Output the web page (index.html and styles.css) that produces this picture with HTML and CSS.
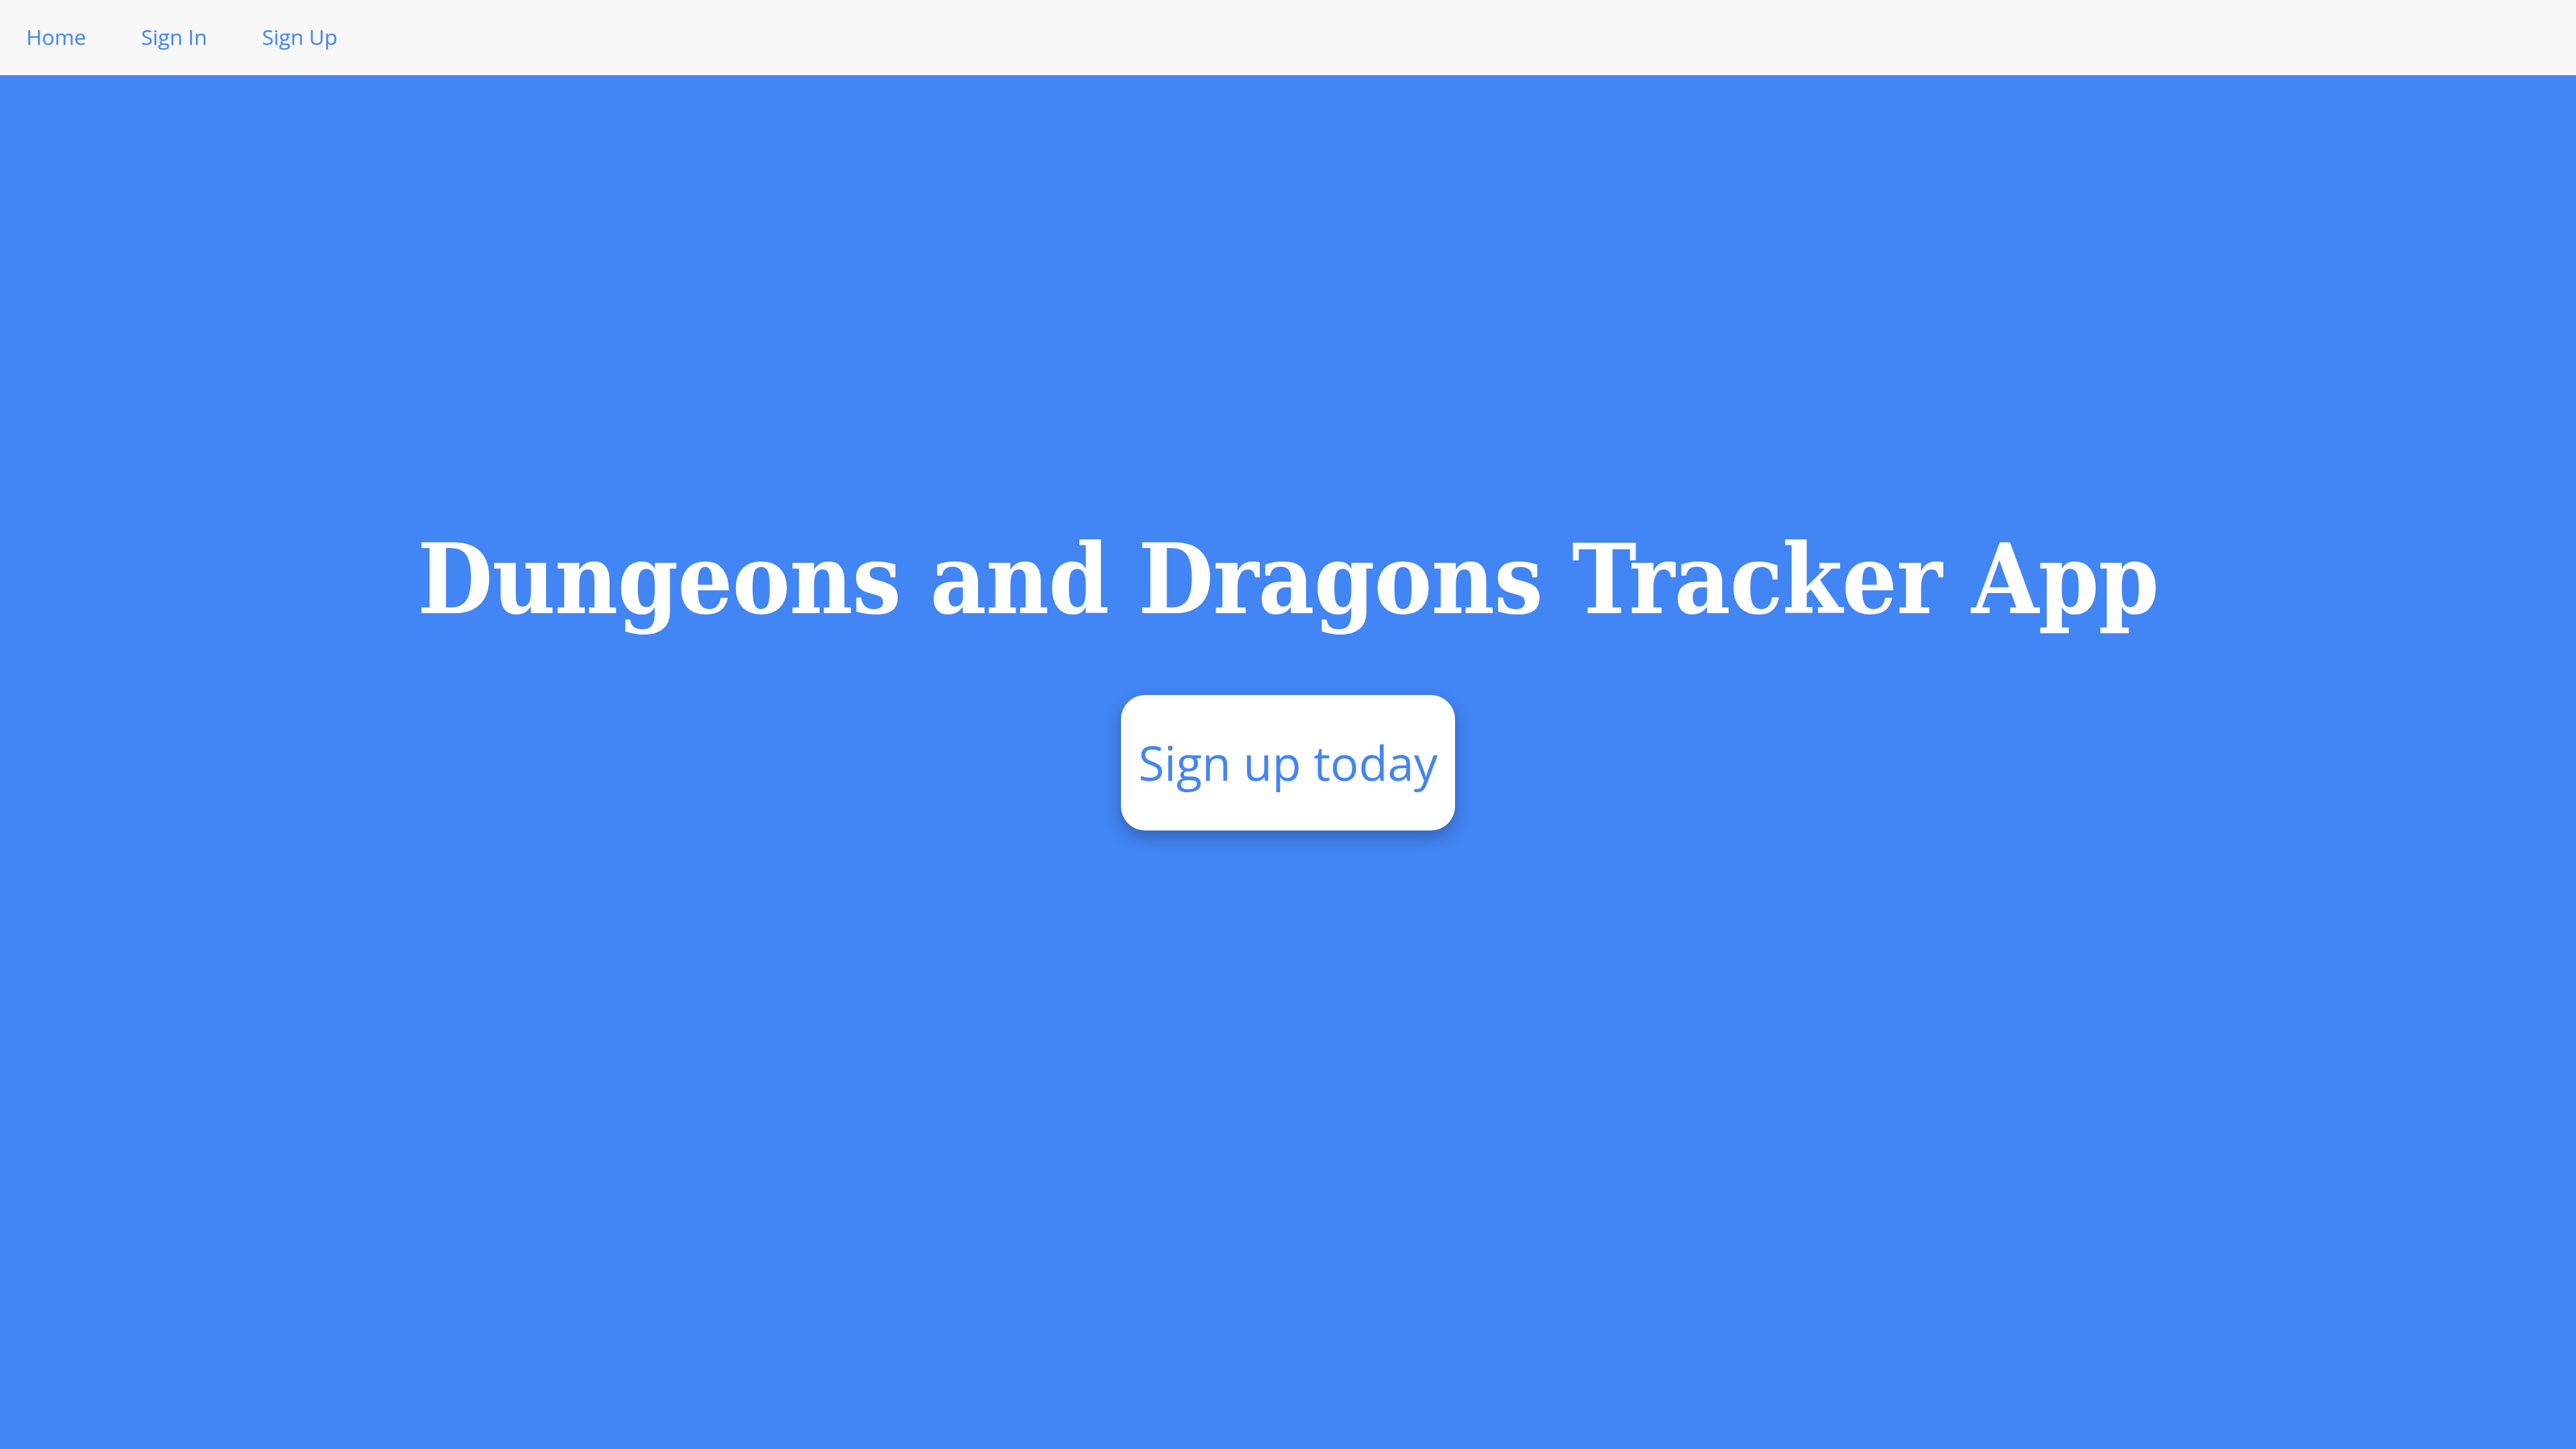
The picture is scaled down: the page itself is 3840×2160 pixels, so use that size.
FILE: index.html
```html
<!DOCTYPE html>
<html lang="en">
<head>
<meta charset="utf-8">
<title>Dungeons and Dragons Tracker App</title>
<link rel="stylesheet" href="styles.css">
</head>
<body>
<nav class="navbar">
  <a class="nav-link" href="#">Home</a>
  <a class="nav-link" href="#">Sign In</a>
  <a class="nav-link" href="#">Sign Up</a>
</nav>
<main class="hero">
  <h1 class="hero-title">Dungeons and Dragons Tracker App</h1>
  <a class="hero-button" href="#">Sign up today</a>
</main>
</body>
</html>
```

FILE: styles.css
```css
html, body {
  margin: 0;
  padding: 0;
}
body {
  font-family: "Open Sans", "Noto Sans", sans-serif;
  background: #4285f4;
}
.navbar {
  height: 112px;
  box-sizing: border-box;
  background: #f8f8f8;
  display: flex;
  align-items: center;
  padding-left: 39px;
  padding-bottom: 3px;
  gap: 82px;
}
.nav-link {
  color: #4285f4;
  text-decoration: none;
  font-size: 31.6px;
}
.hero {
  height: 2048px;
  box-sizing: border-box;
  display: flex;
  flex-direction: column;
  align-items: center;
  justify-content: center;
  padding-bottom: 256px;
  background: #4285f4;
}
.hero-title {
  margin: 0 0 85px 0;
  color: #ffffff;
  font-family: "DejaVu Serif Condensed", "DejaVu Serif", "Liberation Serif", serif;
  font-stretch: condensed;
  font-weight: bold;
  font-size: 144px;
  line-height: 1.2;
  letter-spacing: -0.9px;
  white-space: nowrap;
}
.hero-button {
  display: inline-block;
  background: #ffffff;
  color: #4285f4;
  text-decoration: none;
  font-size: 70.5px;
  line-height: 96px;
  padding: 53px 26px;
  border-radius: 36px;
  box-shadow: 0 10px 24px rgba(0, 0, 0, 0.25);
}
```
